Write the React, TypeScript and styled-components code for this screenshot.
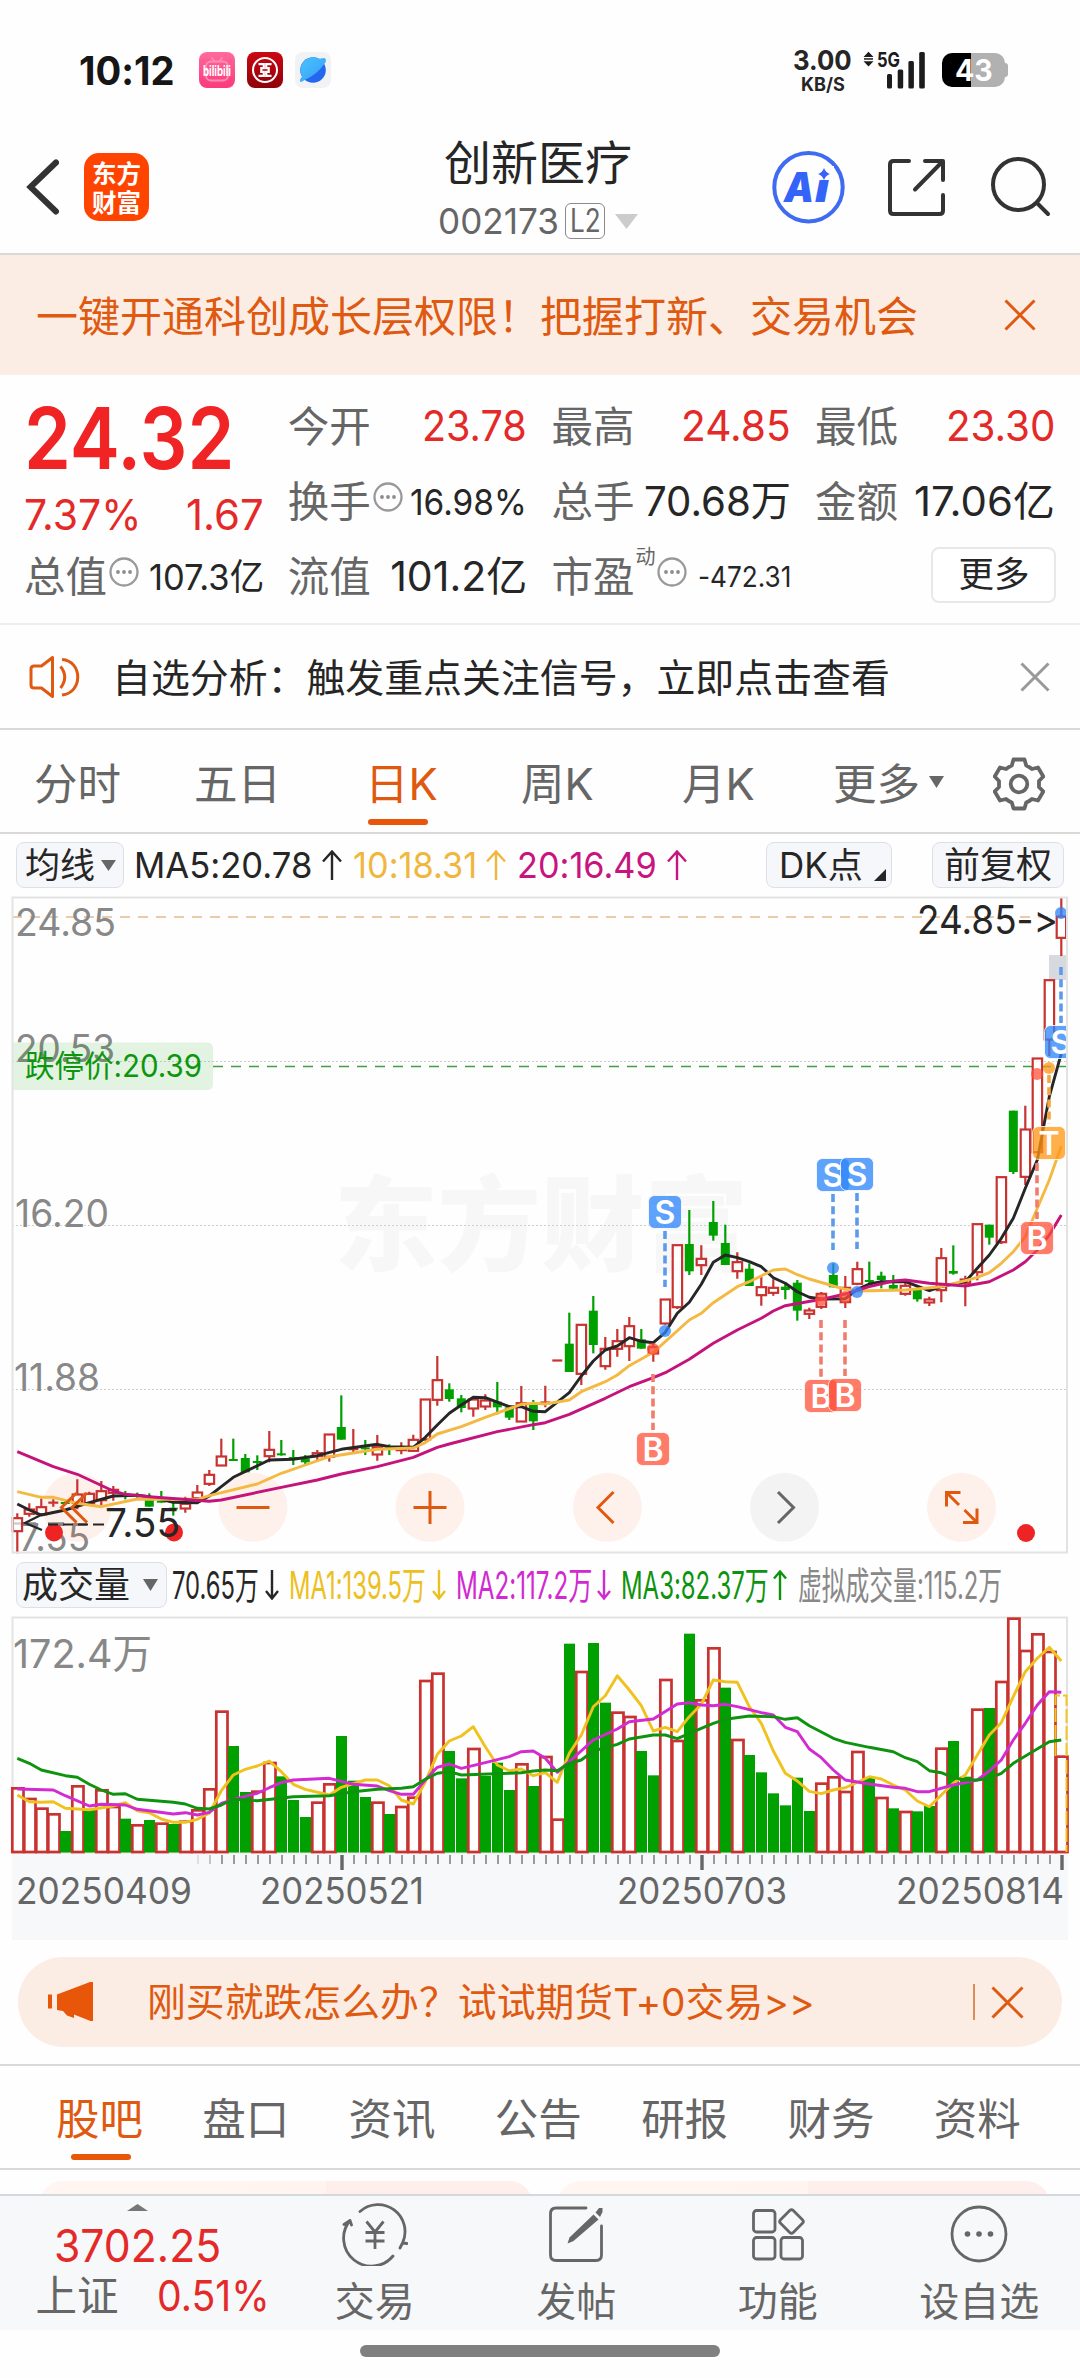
import React, { useLayoutEffect, useRef, useState } from "react";
import styled, { createGlobalStyle } from "styled-components";

const FONT = `Inter, "Noto Sans CJK SC", sans-serif`;
const ORANGE = "#df5a10";
const RED = "#e32a28";
const INK = "#262626";
const GREY = "#666666";

const GlobalStyle = createGlobalStyle`
  * { box-sizing: border-box; }
  body { margin: 0; background: #fefefe; font-family: ${FONT}; color: ${INK}; font-feature-settings: "calt" 0; }
  svg { display: block; flex: none; }
`;

/* ---------- text that shrinks to its column ---------- */

const FitBox = styled.span<{ $w: number; $size: number; $color?: string; $weight?: number; $ml?: number }>`
  display: block;
  flex: none;
  width: ${(p) => p.$w}px;
  margin-left: ${(p) => p.$ml ?? 0}px;
  font-size: ${(p) => p.$size}px;
  line-height: 1;
  color: ${(p) => p.$color ?? "inherit"};
  font-weight: ${(p) => p.$weight ?? 400};
  white-space: pre;
`;
const FitInner = styled.span`
  display: inline-block;
  transform-origin: left center;
`;

type FitProps = { w: number; size: number; color?: string; weight?: number; ml?: number; children: string };

function Fit({ w, size, color, weight, ml, children }: FitProps) {
  const ref = useRef<HTMLSpanElement>(null);
  const [k, setK] = useState(1);
  useLayoutEffect(() => {
    if (ref.current) setK(w / ref.current.offsetWidth);
  }, [w, size, weight, children]);
  return (
    <FitBox $w={w} $size={size} $color={color} $weight={weight} $ml={ml}>
      <FitInner ref={ref} style={{ transform: `scaleX(${k})` }}>
        {children}
      </FitInner>
    </FitBox>
  );
}

/* ---------- page frame ---------- */

const Page = styled.div`
  width: 1080px;
  height: 2378px;
  display: flex;
  flex-direction: column;
  overflow: hidden;
  background: #fefefe;
  & > * { flex-shrink: 0; }
`;

/* ---------- status bar ---------- */

const StatusBar = styled.div`
  height: 118px;
  padding: 22px 72px 0 79px;
  display: flex;
  align-items: center;
`;
const StatusIcons = styled.div`
  display: flex;
  gap: 12px;
  margin-left: 24px;
`;
const NetSpeed = styled.div`
  display: flex;
  flex-direction: column;
  align-items: center;
  margin-right: 11px;
`;
const Battery = styled.div`
  width: 63px;
  height: 34px;
  margin-left: 17px;
  border-radius: 10px;
  background: linear-gradient(90deg, #000 0 29px, #b1b1b1 29px);
  display: flex;
  align-items: center;
  justify-content: center;
`;
const BatteryNub = styled.div`
  width: 3px;
  height: 14px;
  border-radius: 0 3px 3px 0;
  background: #b1b1b1;
`;

function BiliIcon() {
  return (
    <svg width="36" height="36" viewBox="0 0 36 36">
      <defs>
        <linearGradient id="bili" x1="0" y1="0" x2="0" y2="1">
          <stop offset="0" stopColor="#ff6a9c" />
          <stop offset="1" stopColor="#fb3a7c" />
        </linearGradient>
      </defs>
      <rect width="36" height="36" rx="8" fill="url(#bili)" />
      <g fill="none" stroke="#ff8db3" strokeWidth="1.8" strokeLinecap="round">
        <rect x="7" y="9.500" width="22" height="19" rx="5" />
        <path d="M13 6l3 3.500M23 6l-3 3.500" />
      </g>
      <text x="4" y="24" fontFamily={FONT} fontSize="14" fontWeight="700" fill="#fff" textLength="28" lengthAdjust="spacingAndGlyphs">
        bilibili
      </text>
    </svg>
  );
}

function BankIcon() {
  return (
    <svg width="36" height="36" viewBox="0 0 36 36">
      <defs>
        <linearGradient id="bank" x1="0" y1="0" x2="0" y2="1">
          <stop offset="0" stopColor="#cc0714" />
          <stop offset="1" stopColor="#8f0208" />
        </linearGradient>
      </defs>
      <rect width="36" height="36" rx="8" fill="url(#bank)" />
      <circle cx="18" cy="18" r="12" fill="none" stroke="#fff" strokeWidth="2" />
      <path d="M11.500 12.200h5.300v4h-2.500v3.600h2.500v4h-5.300M24.500 12.200h-5.300v4h2.500v3.600h-2.500v4h5.300" fill="none" stroke="#fff" strokeWidth="2.200" />
    </svg>
  );
}

function PlanetIcon() {
  return (
    <svg width="36" height="36" viewBox="0 0 36 36">
      <defs>
        <linearGradient id="planet" x1="0" y1="0" x2="1" y2="1">
          <stop offset="0" stopColor="#48c4ff" />
          <stop offset="1" stopColor="#3a9bf6" />
        </linearGradient>
      </defs>
      <rect width="36" height="36" rx="8" fill="#f1f2f4" />
      <circle cx="18" cy="18" r="12.800" fill="#2467ee" />
      <path d="M9.500 27.500A12.800 12.800 0 0 1 24 6.700L29 6q3 .8 1.400 4.500Q23 22 9.500 28Q4 32 5 27.500l2-3z" fill="url(#planet)" />
    </svg>
  );
}

function SignalIcon() {
  return (
    <svg width="62" height="38" viewBox="863 50 62 38">
      <g fill="#1c1c1c">
        <path d="M868.500 50.800l5 5.200h-10zM868.500 65.400l5-5.200h-10z" />
        <rect x="864" y="57.200" width="9" height="1.500" />
        <rect x="887" y="73" width="5" height="14.500" rx="1.500" />
        <rect x="897.700" y="68.500" width="5.500" height="19" rx="1.500" />
        <rect x="908.400" y="60" width="5.500" height="27.500" rx="1.500" />
        <rect x="919.200" y="51" width="5.600" height="36.500" rx="1.500" />
        <text x="877" y="66" fontFamily={FONT} fontSize="20.500" fontWeight="700" textLength="23" lengthAdjust="spacingAndGlyphs">
          5G
        </text>
      </g>
    </svg>
  );
}

/* ---------- header ---------- */

const Header = styled.header`
  height: 137px;
  border-bottom: 2px solid #d9d9d9;
  display: flex;
  align-items: center;
  padding: 3px 29px 0 26px;
`;
const Logo = styled.div`
  width: 68px;
  height: 68px;
  margin-left: 25px;
  border-radius: 15px;
  background: #ff4400;
  color: #fff;
  font: 700 24.500px/29px "Noto Sans CJK SC", sans-serif;
  display: flex;
  flex-direction: column;
  align-items: center;
  justify-content: center;
`;
const Titles = styled.div`
  display: flex;
  flex-direction: column;
  align-items: flex-start;
  margin-left: 289px;
  padding-top: 4px;
  gap: 17px;
`;
const StockName = styled.h1`
  margin: 0 0 0 6px;
  font-size: 47px;
  line-height: 47px;
  font-weight: 400;
`;
const CodeRow = styled.div`
  display: flex;
  align-items: center;
  height: 36px;
`;
const LevelTag = styled.div`
  width: 40px;
  height: 36px;
  margin: 0 10px 0 6px;
  border: 1.500px solid #8a8a8a;
  border-radius: 6px;
  display: flex;
  align-items: center;
  justify-content: center;
`;
const HeaderTools = styled.div`
  display: flex;
  align-items: center;
  margin-left: 133px;
  width: 280px;
`;

function Cross({ size, color, sw = 3 }: { size: number; color: string; sw?: number }) {
  return (
    <svg width={size} height={size} viewBox={`0 0 ${size} ${size}`}>
      <path d={`M1.500 1.500L${size - 1.5} ${size - 1.5}M${size - 1.5} 1.500L1.500 ${size - 1.5}`} stroke={color} strokeWidth={sw} fill="none" />
    </svg>
  );
}

function Caret({ w, h, color, up }: { w: number; h: number; color: string; up?: boolean }) {
  return (
    <svg width={w} height={h} viewBox={`0 0 ${w} ${h}`}>
      <path d={up ? `M0 ${h}H${w}L${w / 2} 0z` : `M0 0H${w}L${w / 2} ${h}z`} fill={color} />
    </svg>
  );
}

/* ---------- banner, quote board, notice ---------- */

const Banner = styled.div`
  height: 120px;
  background: #fcede4;
  color: ${ORANGE};
  display: flex;
  align-items: center;
  justify-content: space-between;
  padding: 0 44px 0 36px;
  font-size: 42px;
  line-height: 42px;
`;
const BannerText = styled.span`
  padding-top: 3px;
`;
const Quote = styled.section`
  height: 250px;
  border-bottom: 2px solid #ededed;
  padding: 14px 25px 0 24px;
  display: grid;
  grid-template-columns: repeat(4, 239.500px);
  grid-template-rows: repeat(3, 75px);
  column-gap: 24.200px;
`;
const PriceCell = styled.div`
  grid-row: 1 / 3;
  display: flex;
  flex-direction: column;
  padding-top: 7px;
`;
const PriceChange = styled.div`
  display: flex;
  justify-content: space-between;
  margin-top: 12px;
`;
const Cell = styled.div`
  display: flex;
  align-items: center;
`;
const Label = styled.span`
  font-size: 41.500px;
  line-height: 42px;
  color: ${GREY};
`;
const Push = styled.span`
  flex: 1;
`;
const Sup = styled.span`
  font-size: 20px;
  line-height: 20px;
  color: ${GREY};
  align-self: flex-start;
  margin: 8px 0 0 1px;
`;
const DotsWrap = styled.span<{ $ml: number }>`
  margin: 0 0 9px ${(p) => p.$ml}px;
`;
const MoreButton = styled.button`
  width: 125px;
  height: 56px;
  margin: 0 -1px 4px auto;
  padding: 0 0 0 2px;
  border: 2px solid #e8e8e8;
  border-radius: 8px;
  background: #fff;
  font: 400 35.500px/36px ${FONT};
  color: ${INK};
`;

function Dots({ ml }: { ml: number }) {
  return (
    <DotsWrap $ml={ml}>
      <svg width="30" height="30" viewBox="0 0 30 30">
        <circle cx="15" cy="15" r="13.500" fill="none" stroke="#999" strokeWidth="2.300" />
        <g fill="#8c8c8c">
          <circle cx="9" cy="15" r="1.900" />
          <circle cx="15" cy="15" r="1.900" />
          <circle cx="21" cy="15" r="1.900" />
        </g>
      </svg>
    </DotsWrap>
  );
}

const Notice = styled.div`
  height: 105px;
  border-bottom: 2px solid #d9d9d9;
  display: flex;
  align-items: center;
  padding: 0 30px 0 29px;
`;
const NoticeText = styled.span`
  font-size: 38.900px;
  line-height: 40px;
  padding-top: 2px;
  margin: 0 auto 0 31px;
`;

/* ---------- period tabs ---------- */

const PeriodTabs = styled.nav`
  height: 104px;
  border-bottom: 2px solid #d9d9d9;
  display: flex;
  align-items: flex-start;
  padding: 32px 0 0 34px;
`;
const Tab = styled.div<{ $ml?: number; $w: number; $active?: boolean; $gap: number; $bar: number }>`
  width: ${(p) => p.$w}px;
  margin-left: ${(p) => p.$ml ?? 0}px;
  font-size: 43.500px;
  line-height: 44px;
  white-space: nowrap;
  color: ${(p) => (p.$active ? ORANGE : GREY)};
  &::after {
    content: "";
    display: ${(p) => (p.$active ? "block" : "none")};
    width: 60px;
    height: 6px;
    margin: ${(p) => p.$gap}px 0 0 ${(p) => p.$bar}px;
    border-radius: 3px;
    background: #e8560a;
  }
`;
const CaretSlot = styled.div`
  margin: 14px 0 0 9px;
`;
const GearSlot = styled.div`
  margin: -5px 0 0 49px;
`;

function Gear() {
  return (
    <svg width="52" height="54" viewBox="-26 -27 52 54">
      <path
        d="M-5.500 -24.500H5.500L7.200 -18.500Q10.500 -17.200 13 -15L19 -16.500L24.300 -7.500L20 -3V3L24.300 7.500L19 16.500L13 15Q10.500 17.200 7.200 18.500L5.500 24.500H-5.500L-7.200 18.500Q-10.500 17.200 -13 15L-19 16.500L-24.300 7.500L-20 3V-3L-24.300 -7.500L-19 -16.500L-13 -15Q-10.500 -17.200 -7.200 -18.500Z"
        fill="none"
        stroke={GREY}
        strokeWidth="3.800"
        strokeLinejoin="round"
      />
      <circle r="8.300" fill="none" stroke={GREY} strokeWidth="3.800" />
    </svg>
  );
}

/* ---------- indicator rows ---------- */

const IndicatorRow = styled.div<{ $h: number }>`
  height: ${(p) => p.$h}px;
  padding: 0 16px 0 16px;
  display: flex;
  align-items: center;
`;
const Chip = styled.div<{ $w: number; $ml?: number; $pad: number }>`
  width: ${(p) => p.$w}px;
  height: 46px;
  margin-left: ${(p) => p.$ml ?? 0}px;
  padding-left: ${(p) => p.$pad}px;
  display: flex;
  align-items: center;
  flex: none;
  border: 1.500px solid #dde0e7;
  border-radius: 8px;
  background: #f6f7fa;
`;
const ChipCaret = styled.div<{ $ml: number; $mt?: number }>`
  margin-left: ${(p) => p.$ml}px;
  margin-top: ${(p) => p.$mt ?? 0}px;
`;
const ArrowSlot = styled.div<{ $ml: number }>`
  margin-left: ${(p) => p.$ml}px;
`;

function Arrow({ ml, w, color, down }: { ml: number; w: number; color: string; down?: boolean }) {
  const m = w / 2;
  return (
    <ArrowSlot $ml={ml}>
      <svg width={w} height="30" viewBox={`0 0 ${w} 30`}>
        <path
          d={down ? `M${m} 0V28M1 ${28 - m}L${m} 28.500L${w - 1} ${28 - m}` : `M${m} 30V2M1 ${1.5 + m}L${m} 1.500L${w - 1} ${1.5 + m}`}
          fill="none"
          stroke={color}
          strokeWidth="2.400"
        />
      </svg>
    </ArrowSlot>
  );
}

/* ---------- chart data: pixel rows on the plotting surface ---------- */

type Candle = ["r" | "g", number, number, number, number];
const early: Candle[] = [
  ["r", 910, 923, 965, 1030], ["r", 880, 897, 913, 920], ["r", 865, 890, 914, 916], ["r", 868, 876, 880, 890],
  ["g", 872, 876, 880, 884], ["r", 808, 852, 880, 898], ["r", 845, 850, 882, 885], ["r", 813, 842, 872, 885],
  ["r", 828, 838, 850, 872], ["g", 843, 850, 860, 868], ["g", 848, 855, 859, 870], ["g", 850, 865, 890, 890],
  ["g", 843, 872, 876, 878], ["g", 875, 893, 897, 917], ["r", 860, 880, 897, 908], ["r", 825, 846, 866, 868],
  ["r", 780, 793, 823, 828], ["r", 686, 738, 768, 768], ["g", 686, 747, 752, 752], ["g", 732, 744, 787, 787],
  ["g", 736, 753, 758, 780], ["r", 663, 718, 740, 757], ["g", 690, 730, 735, 737], ["g", 720, 741, 746, 765],
  ["g", 735, 745, 757, 762], ["r", 720, 728, 740, 750], ["r", 672, 672, 742, 755], ["g", 556, 651, 689, 689],
  ["r", 657, 715, 720, 727], ["g", 690, 712, 716, 735], ["r", 675, 710, 735, 752], ["g", 703, 708, 712, 735],
  ["r", 697, 710, 722, 733], ["r", 674, 688, 724, 726], ["r", 567, 567, 690, 692], ["r", 438, 509, 571, 587],
  ["g", 520, 538, 567, 575], ["g", 555, 565, 594, 607], ["r", 565, 567, 597, 620], ["r", 553, 570, 591, 600],
  ["g", 516, 575, 592, 613], ["g", 585, 592, 623, 630], ["r", 528, 578, 636, 636], ["g", 570, 580, 634, 660],
];
const late: Candle[] = [
  ["r", 857, 905, 910, 922], ["r", 779, 779, 784, 784], ["g", 638, 731, 816, 816], ["r", 673, 673, 823, 855],
  ["g", 588, 632, 735, 760], ["r", 711, 745, 800, 809], ["r", 687, 722, 748, 770], ["r", 651, 677, 740, 783],
  ["g", 687, 718, 746, 746], ["r", 730, 740, 762, 785], ["r", 597, 597, 672, 674], ["r", 434, 434, 623, 627],
  ["g", 330, 432, 514, 525], ["r", 436, 475, 497, 525], ["g", 303, 366, 407, 422], ["g", 374, 429, 495, 495],
  ["r", 457, 485, 515, 536], ["g", 490, 506, 558, 558], ["r", 530, 560, 587, 617], ["r", 538, 562, 580, 587],
  ["g", 552, 560, 570, 598], ["g", 540, 548, 632, 662], ["r", 623, 630, 643, 657], ["r", 576, 580, 622, 627],
  ["g", 490, 525, 562, 562], ["r", 528, 562, 608, 624], ["r", 485, 506, 553, 556], ["g", 485, 540, 546, 550],
  ["g", 515, 527, 540, 565], ["g", 525, 555, 566, 570], ["r", 545, 556, 583, 587], ["g", 560, 565, 598, 605],
  ["r", 590, 597, 609, 618], ["r", 444, 473, 572, 607], ["g", 436, 513, 521, 524], ["r", 527, 537, 550, 619],
  ["r", 371, 371, 518, 541], ["g", 374, 374, 413, 434], ["r", 230, 230, 428, 432], ["g", 32, 32, 216, 222],
  ["r", 17, 87, 232, 255], ["r", -126, -126, 158, 158], ["r", -361, -361, -180, -132], ["r", -609, -552, -485, -432],
];
const up1 = (v: number) => 1210 + v / 3;
const up2 = (v: number) => 1100 + v / 3;
const candles: Candle[] = [
  ...early.map((c): Candle => [c[0], up1(c[1]), up1(c[2]), up1(c[3]), up1(c[4])]),
  ...late.map((c): Candle => [c[0], up2(c[1]), up2(c[2]), up2(c[3]), up2(c[4])]),
];
const cx = (i: number) => 17.3 + 12 * i;

const path = (pts: number[], y: (v: number, i: number) => number) => {
  let d = "";
  for (let k = 0; k < pts.length; k += 2) d += `${k ? "L" : "M"}${cx(pts[k]).toFixed(1)} ${y(pts[k + 1], pts[k]).toFixed(1)}`;
  return d;
};
const priceY = (v: number, i: number) => (i < 44 ? up1(v) : up2(v));
const volY = (v: number) => 1550 + v / 3;

const ma5 = [0,882,1,900,2,915,4,900,6,878,8,858,10,856,11,860,13,877,15,878,16,858,17,830,18,802,21,750,23,748,25,737,27,718,30,703,31,710,33,712,34,682,35,645,36,610,37,585,38,562,39,563,41,590,42,590,43,604,44,935,46,878,47,828,48,783,49,750,50,738,51,713,52,724,53,728,54,697,55,640,56,607,57,553,58,487,59,465,60,473,61,485,62,500,63,533,64,550,65,575,66,592,67,597,69,596,70,568,71,552,72,545,74,545,76,572,77,560,79,545,80,505,81,465,82,415,83,355,84,265,85,180,86,-10,87,-140];
const ma10 = [0,845,2,862,3,862,5,880,7,890,10,867,15,868,16,857,20,822,22,790,24,765,26,740,30,718,33,714,34,698,35,672,37,650,39,622,42,583,43,580,44,912,46,900,47,875,49,845,50,825,51,797,53,757,56,660,57,640,58,608,60,560,61,545,63,510,64,507,65,524,66,537,69,568,70,573,74,570,77,560,79,542,80,532,81,518,82,490,83,455,84,410,85,325,86,240,87,138];
const ma20 = [0,725,3,770,5,793,8,843,9,853,11,860,16,874,17,870,22,832,25,810,27,792,30,770,33,742,35,712,36,702,40,665,43,644,44,968,46,943,49,895,51,860,53,833,54,818,56,778,58,730,60,690,62,655,63,633,64,617,67,598,69,582,71,560,73,543,74,540,76,550,79,558,81,545,83,510,84,485,85,450,86,405,87,345];

const volumes =
  "r712 r744 r773 r790 g843 r706 g780 r718 r768 g806 r823 g810 r818 g822 r812 r778 r715 r482 g588 g726 r722 r636 g679 g750 g801 r755 r700 g558 g692 g741 r755 g792 r768 r740 r390 r368 g603 g685 r594 g678 g638 g720 r640 g708 r618 r806 g281 r363 g279 g458 r485 r498 g603 g676 r387 r570 g251 r448 r292 g413 r567 g615 g667 g730 g766 g683 g783 r698 r679 r723 r603 g683 r741 g775 r783 g784 g768 r593 g573 g680 r476 g474 r393 r203 r300 r250 r303 r617".split(" ");
const vma1 = [0,735,1,755,2,757,3,755,4,775,6,779,8,768,9,758,10,782,11,788,12,807,13,817,14,817,15,808,16,790,17,722,18,675,19,658,20,648,21,633,22,665,23,703,24,718,26,735,27,712,29,690,30,690,31,707,32,750,33,762,34,695,35,613,36,573,37,558,38,530,39,590,40,645,41,662,42,657,43,677,44,668,45,697,46,610,47,555,48,470,49,437,50,377,51,420,52,467,53,543,54,532,55,545,56,500,57,463,58,390,59,395,60,397,61,470,62,520,63,603,64,670,65,693,66,724,67,731,68,720,69,713,70,697,71,680,72,687,73,705,74,720,75,753,76,770,77,735,78,700,79,675,80,615,81,555,82,518,83,440,84,365,85,325,86,292,87,333];
const vma2 = [0,717,3,720,4,737,6,768,7,763,9,765,10,778,13,792,14,788,15,795,16,787,17,760,18,748,20,730,21,713,22,698,23,690,26,685,28,703,30,708,31,722,32,733,33,733,34,690,35,652,36,642,37,655,39,638,41,620,42,605,43,603,44,625,45,667,46,635,48,570,50,537,51,515,53,507,55,462,56,458,57,465,58,467,59,463,60,470,62,488,63,495,64,532,65,545,66,597,67,623,68,660,69,690,71,702,73,712,74,715,75,725,76,725,78,705,79,698,80,690,81,663,82,630,83,570,84,520,85,465,86,425,87,427];
const vma3 = [0,625,1,640,2,660,4,677,5,682,6,703,7,720,8,733,9,731,10,748,13,757,14,762,15,775,16,777,17,765,18,748,20,752,23,740,26,737,28,725,30,718,32,715,33,710,34,688,35,670,36,665,37,675,41,670,42,668,43,663,44,660,45,662,46,640,47,630,48,603,50,583,51,567,53,555,54,555,55,566,57,535,58,520,59,508,61,498,63,500,64,508,65,503,66,527,68,565,69,577,71,592,73,605,74,623,75,635,76,662,77,668,78,683,79,690,80,690,81,685,82,670,83,640,86,575,87,570];

const CANDLE_RED = "#c83230";
const CANDLE_GREEN = "#00a000";
const FRAME = "#e3e3e3";

const ChartSvg = styled.svg`
  font-family: ${FONT};
`;
const Mark = styled.text`
  font-weight: 600;
  font-size: 32px;
  text-anchor: middle;
  fill: #fff;
`;

type TxtProps = { x: number; x2: number; y: number; size: number; fill: string; weight?: number; children: string };
function Txt({ x, x2, y, size, fill, weight, children }: TxtProps) {
  return (
    <text x={x} y={y} fontSize={size} fill={fill} fontWeight={weight} textLength={x2 - x} lengthAdjust="spacingAndGlyphs">
      {children}
    </text>
  );
}

const tone: Record<string, [string, string]> = {
  S: ["rgba(45,133,250,.76)", "#5c9bec"],
  B: ["rgba(255,78,54,.74)", "#f27c6c"],
  T: ["rgba(255,150,20,.76)", "#f2a63c"],
};
function Marker({ k, x, y, dot, from, to }: { k: string; x: number; y: number; dot: number; from: number; to: number }) {
  const [box, line] = tone[k];
  return (
    <g>
      <path d={`M${x} ${from}V${to}`} stroke={line} strokeWidth="3.600" strokeDasharray="8 4.200" />
      <circle cx={x} cy={dot} r="6" fill={box} />
      <rect x={x - 16.5} y={y - 16.5} width="33" height="33" rx="6" fill={box} stroke="rgba(255,255,255,.8)" strokeWidth="1" />
      <Mark x={x} y={y + 11.5}>{k}</Mark>
    </g>
  );
}

function PriceChart() {
  const o = { fill: "none", stroke: ORANGE, strokeWidth: 3 };
  return (
    <ChartSvg width="1080" height="658" viewBox="0 896 1080 658">
      <defs>
        <clipPath id="plot">
          <rect x="11" y="896" width="1057" height="658" />
        </clipPath>
      </defs>
      <g clipPath="url(#plot)">
        <Txt x={334} x2={748} y={1263} size={103} fill="#f7f7f7" weight={900}>东方财富</Txt>
        <g stroke="#cfcfcf" strokeWidth="1" strokeDasharray="2 2">
          <path d="M12 1061.500H1067M12 1225.500H1067M12 1389.500H1067" />
        </g>
        <path d="M12 917H1067" stroke="#e3b98c" strokeWidth="1.600" strokeDasharray="10 8" />
        <path d="M213 1066.500H1067" stroke="#3f9f48" strokeWidth="1.400" strokeDasharray="10 8" />
        <Txt x={15} x2={116} y={935.5} size={38} fill="#888">24.85</Txt>
        <Txt x={15} x2={115} y={1061.5} size={38} fill="#888">20.53</Txt>
        <Txt x={15} x2={109} y={1226.5} size={38} fill="#888">16.20</Txt>
        <Txt x={14} x2={100} y={1390.500} size={38} fill="#888">11.88</Txt>
        <Txt x={19} x2={90} y={1550.5} size={38} fill="#888">7.55</Txt>
        <path d="M12 1042.500H207q6 0 6 6V1084q0 6 -6 6H12z" fill="rgba(0,155,0,.11)" />
        <Txt x={25} x2={202} y={1077} size={31} fill="#0d960d">跌停价:20.39</Txt>

        {[77, 253, 430, 607.5, 961.5].map((x) => (
          <circle key={x} cx={x} cy="1507.300" r="34.500" fill="rgba(255,100,30,.09)" />
        ))}
        <circle cx="784.500" cy="1507.300" r="34.500" fill="#f3f3f3" />
        <circle cx="54" cy="1532.500" r="9" fill="#ee2424" />
        <circle cx="174" cy="1532.500" r="9" fill="#ee2424" />
        <circle cx="1026" cy="1533" r="9" fill="#ee2424" />
        <path d="M14 1523.500H36M48 1523.500H64" stroke="#888" strokeWidth="2.400" />

        <rect x="1049" y="955" width="18" height="25" fill="#d6d9de" />
        {candles.map(([c, hi, top, bot, lo], i) => {
          const x = cx(i);
          const thin = bot - top < 2.5;
          const color = c === "r" ? CANDLE_RED : CANDLE_GREEN;
          return (
            <g key={i} stroke={color} strokeWidth="2.200">
              {c === "r" ? (
                <>
                  <path d={`M${x} ${hi}V${top}M${x} ${bot}V${lo}`} />
                  {thin ? (
                    <path d={`M${x - 5} ${(top + bot) / 2}h10`} />
                  ) : (
                    <rect x={x - 4.6} y={top + 0.5} width="9.400" height={bot - top - 1} fill="#fff" fillOpacity=".6" />
                  )}
                </>
              ) : (
                <>
                  <path d={`M${x} ${hi}V${lo}`} />
                  <rect x={x - 4.5} y={top} width="9" height={Math.max(bot - top, 2)} fill={color} stroke="none" />
                </>
              )}
            </g>
          );
        })}
        <g fill="none" strokeWidth="2.900" strokeLinejoin="round">
          <path d={path(ma5, priceY)} stroke={INK} />
          <path d={path(ma10, priceY)} stroke="#f4b942" />
          <path d={path(ma20, priceY)} stroke="#c4147c" />
        </g>

        <Marker k="B" x={653} y={1449} dot={1349} from={1374} to={1430} />
        <Marker k="S" x={665} y={1212} dot={1331} from={1231} to={1287} />
        <Marker k="S" x={833} y={1175} dot={1268} from={1194} to={1250} />
        <Marker k="S" x={857} y={1174} dot={1292} from={1193} to={1249} />
        <Marker k="B" x={821} y={1396} dot={1300} from={1320} to={1377} />
        <Marker k="B" x={845} y={1395} dot={1297} from={1320} to={1376} />
        <Marker k="B" x={1037} y={1238} dot={1074} from={1163} to={1219} />
        <Marker k="T" x={1049} y={1143} dot={1068} from={1075} to={1124} />
        <Marker k="S" x={1061} y={1042} dot={913} from={967} to={1023} />

        <g {...o}>
          <path d="M76.500 1493L61.500 1507.500L76.500 1522.500M87 1493L72 1507.500L87 1522.500" />
          <path d="M236.500 1507.500H269.500M413.500 1507.500H446.500M430 1491V1524" />
          <path d="M613.500 1492L598 1507.500L613.500 1523" />
          <path d="M778 1492L793.500 1507.500L778 1523" stroke={GREY} />
          <path d="M946.500 1506.500V1492.500H960.500M946.500 1492.500L959 1505M977 1508.500V1522.500H963M977 1522.500L964.500 1510" />
        </g>
        <path d="M41 1515L25 1523L42 1530M48 1524.500h10m5 0h10m5 0h10m5 0h11" fill="none" stroke={INK} strokeWidth="2.200" />
        <Txt x={105} x2={180} y={1536.500} size={39} fill={INK}>7.55</Txt>
        <Txt x={917} x2={1058} y={933.5} size={39} fill={INK}>{"24.85->"}</Txt>
        <rect x="12.500" y="897.500" width="1054.500" height="655" fill="none" stroke={FRAME} strokeWidth="2" />
      </g>
    </ChartSvg>
  );
}

function VolumeChart() {
  return (
    <ChartSvg width="1080" height="324" viewBox="0 1616 1080 324">
      <rect x="12" y="1853" width="1056" height="87" fill="#f7f8fa" />
      <rect x="12.500" y="1617.500" width="1054.500" height="235" fill="none" stroke={FRAME} strokeWidth="2" />
      <Txt x={13} x2={152} y={1667.5} size={40} fill="#888">172.4万</Txt>
      {volumes.map((v, i) => {
        const y = volY(Number(v.slice(1)));
        return v[0] === "g" ? (
          <rect key={i} x={cx(i) - 5.300} y={y} width="11" height={1852.500 - y} fill={CANDLE_GREEN} />
        ) : (
          <rect key={i} x={cx(i) - 5} y={y + 1} width="11.200" height={1851 - y} fill="#fff" stroke={CANDLE_RED} strokeWidth="2.700" />
        );
      })}
      <path d="M1055.500 1756V1695.500H1066.500V1756M1066.500 1760V1852" fill="none" stroke="#f2c41c" strokeWidth="2" strokeDasharray="14 3" />
      <g fill="none" strokeWidth="2.900" strokeLinejoin="round">
        <path d={path(vma1, volY)} stroke="#f0c21e" />
        <path d={path(vma2, volY)} stroke="#d22bd2" />
        <path d={path(vma3, volY)} stroke="#0f930f" />
      </g>
      {volumes.map((_, i) => {
        if (i < 15) return null;
        const major = i === 27 || i === 57 || i === 87;
        return (
          <path
            key={i}
            d={`M${cx(i) + 0.7} 1855V${major ? 1870 : 1864}`}
            stroke={major ? GREY : "#9a9a9a"}
            strokeWidth={major ? 3.4 : 2}
            opacity={i === 15 ? 0.25 : i === 16 ? 0.55 : 1}
          />
        );
      })}
      <Txt x={16} x2={192} y={1903.5} size={36.5} fill={GREY}>20250409</Txt>
      <Txt x={260} x2={424} y={1903.5} size={36.5} fill={GREY}>20250521</Txt>
      <Txt x={617} x2={787} y={1903.5} size={36.5} fill={GREY}>20250703</Txt>
      <Txt x={896} x2={1064} y={1903.5} size={36.5} fill={GREY}>20250814</Txt>
    </ChartSvg>
  );
}

/* ---------- promo, section tabs, card strip ---------- */

const Promo = styled.div`
  height: 90px;
  margin: 17px 18px;
  padding: 0 38px 0 29px;
  border-radius: 45px;
  background: #fcede4;
  display: flex;
  align-items: center;
`;
const PromoRule = styled.div`
  flex: none;
  width: 2px;
  height: 36px;
  margin: 0 16px 0 auto;
  background: #e08a58;
`;
const SectionTabs = styled.nav`
  height: 106px;
  border-top: 2px solid #d9d9d9;
  border-bottom: 2px solid #d9d9d9;
  display: flex;
  padding: 31px 0 0 56px;
`;
const CardStrip = styled.div`
  height: 24px;
  padding: 11px 30px 0 39px;
  display: flex;
  gap: 24px;
  overflow: hidden;
`;
const Card = styled.div<{ $split: number }>`
  flex: 1;
  height: 60px;
  border-radius: 24px;
  background: linear-gradient(90deg, #fff6f2 0, #fff4f0 ${(p) => p.$split}%, #feefed ${(p) => p.$split}%);
`;

/* ---------- bottom bar ---------- */

const BottomBar = styled.footer`
  height: 136px;
  border-top: 2px solid #d3d8de;
  background: #f7f8fa;
  display: flex;
`;
const IndexBox = styled.div`
  width: 274px;
  display: flex;
  flex-direction: column;
  align-items: center;
  padding-top: 8px;
  gap: 12px;
`;
const IndexRow = styled.div`
  width: 234px;
  display: flex;
  align-items: center;
  margin: -5px 0 0 31px;
`;
const NavItem = styled.div`
  flex: 1;
  display: flex;
  flex-direction: column;
  align-items: center;
  padding-top: 6px;
  gap: 15px;
  font-size: 40px;
  line-height: 42px;
  color: ${GREY};
`;
const HomeArea = styled.div`
  height: 48px;
  display: flex;
  justify-content: center;
  padding-top: 15px;
`;
const HomePill = styled.div`
  width: 360px;
  height: 12px;
  border-radius: 6px;
  background: #808080;
`;

const navStroke = { fill: "none", stroke: GREY, strokeWidth: 2.8, strokeLinecap: "round" as const, strokeLinejoin: "round" as const };

function NavTrade() {
  return (
    <svg width="66" height="64" viewBox="-33 -32 66 64">
      <g {...navStroke}>
        <path d="M-15 -22.500A27 27 0 0 1 27.500 9L32 9.500M27.500 9L25 14" />
        <path d="M18 22A27.500 27.500 0 0 1 -25 -13.500L-31 -9.500M-25 -13.500L-23.500 -9" />
        <path d="M-8.500 -12.500L0 -2L8.500 -12.500M0 -2V15M-9.500 -1.500H9.500M-9.500 7H9.500" strokeLinecap="butt" />
      </g>
    </svg>
  );
}
function NavPost() {
  return (
    <svg width="66" height="64" viewBox="-33 -32 66 64">
      <path d="M10 -26H-20Q-25.500 -26 -25.500 -20V21Q-25.500 26.500 -20 26.500H20Q25.500 26.500 25.500 21V-8" {...navStroke} />
      <path d="M17.500 -19.500L22.500 -14.500L-2.500 7L-8.500 9.500L-6.500 3.500Z" fill={GREY} />
      <path d="M19.500 -21.500L23 -26H26.500V-22L24 -17z" fill={GREY} />
    </svg>
  );
}
function NavFeatures() {
  return (
    <svg width="66" height="64" viewBox="-33 -32 66 64">
      <g {...navStroke}>
        <rect x="-24.500" y="-23.500" width="21.500" height="21.500" rx="3" />
        <rect x="-24.500" y="3.500" width="21.500" height="21.500" rx="3" />
        <rect x="3" y="3.500" width="21.500" height="21.500" rx="3" />
        <rect x="4.500" y="-21.500" width="18" height="18" rx="2.500" transform="rotate(45 13.500 -12.500)" />
      </g>
    </svg>
  );
}
function NavMore() {
  return (
    <svg width="66" height="64" viewBox="-33 -32 66 64">
      <circle r="27" {...navStroke} />
      <g fill={GREY}>
        <circle cx="-11.500" r="2.800" />
        <circle r="2.800" />
        <circle cx="11.500" r="2.800" />
      </g>
    </svg>
  );
}

const NAV = [
  { label: "交易", icon: <NavTrade /> },
  { label: "发帖", icon: <NavPost /> },
  { label: "功能", icon: <NavFeatures /> },
  { label: "设自选", icon: <NavMore /> },
];
const SECTIONS = ["股吧", "盘口", "资讯", "公告", "研报", "财务", "资料"];

export default function App() {
  return (
    <Page>
      <GlobalStyle />
      <StatusBar>
        <Fit w={96} size={39} weight={700} color="#161616">10:12</Fit>
        <StatusIcons>
          <BiliIcon />
          <BankIcon />
          <PlanetIcon />
        </StatusIcons>
        <Push />
        <NetSpeed>
          <Fit w={59} size={27.5} weight={700}>3.00</Fit>
          <Fit w={44} size={18.5} weight={700}>KB/S</Fit>
        </NetSpeed>
        <SignalIcon />
        <Battery>
          <Fit w={38} size={30} weight={700} color="#fff">43</Fit>
        </Battery>
        <BatteryNub />
      </StatusBar>

      <Header>
        <svg width="33" height="56" viewBox="26 159 33 56">
          <path d="M56 162.500L30.500 187L56 211.500" fill="none" stroke="#333" strokeWidth="6" strokeLinecap="round" />
        </svg>
        <Logo>
          <span>东方</span>
          <span>财富</span>
        </Logo>
        <Titles>
          <StockName>创新医疗</StockName>
          <CodeRow>
            <Fit w={121} size={36} color={GREY}>002173</Fit>
            <LevelTag>
              <Fit w={31} size={32} color={GREY}>L2</Fit>
            </LevelTag>
            <Caret w={23} h={15} color="#cccccc" />
          </CodeRow>
        </Titles>
        <HeaderTools>
          <svg width="280" height="76" viewBox="771 149 280 76">
            <circle cx="808.500" cy="187.200" r="34.200" fill="none" stroke="#3f6bf0" strokeWidth="4" />
            <g fill="#3564f8" fontFamily={FONT} fontWeight="900" fontSize="41" fontStyle="italic">
              <text x="784" y="201.500" textLength="30" lengthAdjust="spacingAndGlyphs">A</text>
              <text x="815" y="201.500" textLength="14" lengthAdjust="spacingAndGlyphs">i</text>
            </g>
            <rect x="814" y="166" width="20" height="13.500" fill="#fefefe" />
            <path d="M824 168q1.600 4.400 5.800 6q-4.200 1.600 -5.800 6q-1.600 -4.400 -5.800 -6q4.200 -1.600 5.800 -6z" fill="#3564f8" />
            <g fill="none" stroke="#333" strokeWidth="4" strokeLinecap="round" strokeLinejoin="round">
              <path d="M909 161H893.500Q890 161 890 164.500V210.500Q890 214 893.500 214H939.500Q943 214 943 210.500V195" />
              <path d="M925 161H943V180M942 162L915 189.500" />
              <circle cx="1018.500" cy="184.500" r="25.500" />
              <path d="M1037 203L1048 214" />
            </g>
          </svg>
        </HeaderTools>
      </Header>

      <Banner>
        <BannerText>一键开通科创成长层权限！把握打新、交易机会</BannerText>
        <Cross size={32} color={ORANGE} />
      </Banner>

      <Quote>
        <PriceCell>
          <Fit w={210} size={85} weight={600} color="#f02424">24.32</Fit>
          <PriceChange>
            <Fit w={117} size={43} color={RED}>7.37%</Fit>
            <Fit w={78} size={43} color={RED}>1.67</Fit>
          </PriceChange>
        </PriceCell>
        <Cell><Label>今开</Label><Push /><Fit w={105} size={42.500} color={RED}>23.78</Fit></Cell>
        <Cell><Label>最高</Label><Push /><Fit w={110} size={42.500} color={RED}>24.85</Fit></Cell>
        <Cell><Label>最低</Label><Push /><Fit w={109} size={42.500} color={RED}>23.30</Fit></Cell>
        <Cell><Label>换手</Label><Dots ml={2} /><Push /><Fit w={117} size={36}>16.98%</Fit></Cell>
        <Cell><Label>总手</Label><Push /><Fit w={147} size={41}>70.68万</Fit></Cell>
        <Cell><Label>金额</Label><Push /><Fit w={141} size={41}>17.06亿</Fit></Cell>
        <Cell><Label>总值</Label><Dots ml={2} /><Push /><Fit w={115} size={36}>107.3亿</Fit></Cell>
        <Cell><Label>流值</Label><Push /><Fit w={137} size={41}>101.2亿</Fit></Cell>
        <Cell><Label>市盈</Label><Sup>动</Sup><Dots ml={2} /><Push /><Fit w={93} size={29}>-472.31</Fit></Cell>
        <Cell><MoreButton>更多</MoreButton></Cell>
      </Quote>

      <Notice>
        <svg width="52" height="44" viewBox="29 654 52 44">
          <g fill="none" stroke={ORANGE} strokeWidth="3" strokeLinejoin="round">
            <path d="M52.500 656.500V695.500L41.500 687H34Q31 687 31 684V668Q31 665 34 665H41.500Z" />
            <path d="M60.500 665.500Q69 676 60.500 687" />
            <path d="M62 658.500C83 660 83 692 62 694" />
          </g>
        </svg>
        <NoticeText>自选分析：触发重点关注信号，立即点击查看</NoticeText>
        <Cross size={30} color="#999" />
      </Notice>

      <PeriodTabs>
        <Tab $w={87} $gap={13} $bar={0}>分时</Tab>
        <Tab $w={87} $ml={73} $gap={13} $bar={0}>五日</Tab>
        <Tab $w={70} $ml={84} $gap={13} $bar={3} $active>日K</Tab>
        <Tab $w={73} $ml={86} $gap={13} $bar={0}>周K</Tab>
        <Tab $w={73} $ml={88} $gap={13} $bar={0}>月K</Tab>
        <Tab $w={87} $ml={78} $gap={13} $bar={0}>更多</Tab>
        <CaretSlot><Caret w={15} h={12} color={GREY} /></CaretSlot>
        <GearSlot><Gear /></GearSlot>
      </PeriodTabs>

      <IndicatorRow $h={62}>
        <Chip $w={108} $pad={8}>
          <Fit w={70} size={35}>均线</Fit>
          <ChipCaret $ml={6}><Caret w={15} h={11} color={GREY} /></ChipCaret>
        </Chip>
        <Fit w={178} size={36} ml={10}>MA5:20.78</Fit>
        <Arrow ml={10} w={20} color={INK} />
        <Fit w={124} size={36} ml={11} color="#f0b73e">10:18.31</Fit>
        <Arrow ml={9} w={20} color="#f0b73e" />
        <Fit w={140} size={36} ml={11} color="#c8147f">20:16.49</Fit>
        <Arrow ml={10} w={20} color="#c8147f" />
        <Push />
        <Chip $w={126} $pad={12}>
          <Fit w={84} size={35}>DK点</Fit>
          <ChipCaret $ml={11} $mt={20}>
            <svg width="12" height="12" viewBox="0 0 12 12"><path d="M12 0V12H0z" fill={INK} /></svg>
          </ChipCaret>
        </Chip>
        <Chip $w={132} $ml={40} $pad={11}>
          <Fit w={108} size={36}>前复权</Fit>
        </Chip>
      </IndicatorRow>

      <PriceChart />

      <IndicatorRow $h={62}>
        <Chip $w={151} $pad={5}>
          <Fit w={108} size={36}>成交量</Fit>
          <ChipCaret $ml={13}><Caret w={15} h={12} color={GREY} /></ChipCaret>
        </Chip>
        <Fit w={87} size={38} ml={5}>70.65万</Fit>
        <Arrow ml={6} w={14} color={INK} down />
        <Fit w={137} size={38} ml={10} color="#ecc020">MA1:139.5万</Fit>
        <Arrow ml={6} w={14} color="#ecc020" down />
        <Fit w={136} size={38} ml={10} color="#d02ad0">MA2:117.2万</Fit>
        <Arrow ml={5} w={14} color="#d02ad0" down />
        <Fit w={148} size={38} ml={10} color="#0f930f">MA3:82.37万</Fit>
        <Arrow ml={4} w={14} color="#0f930f" />
        <Fit w={204} size={38} ml={11} color="#888">虚拟成交量:115.2万</Fit>
      </IndicatorRow>

      <VolumeChart />

      <Promo>
        <svg width="47" height="42" viewBox="47 1981 47 42">
          <path d="M93 1982V2021H90.500L74 2014.500V2018L67 2015.500L63 2011L57 2010V1994.500L90 1982z" fill="#e8560a" />
          <rect x="48" y="1994.500" width="4" height="14" fill="#e8560a" />
        </svg>
        <Fit w={668} size={38.500} ml={53} color={ORANGE}>刚买就跌怎么办？试试期货T+0交易&gt;&gt;</Fit>
        <PromoRule />
        <Cross size={33} color={ORANGE} />
      </Promo>

      <SectionTabs>
        {SECTIONS.map((s, i) => (
          <Tab key={s} $w={146.6} $active={i === 0} $gap={13} $bar={15}>{s}</Tab>
        ))}
      </SectionTabs>

      <CardStrip>
        <Card $split={58} />
        <Card $split={51} />
      </CardStrip>

      <BottomBar>
        <IndexBox>
          <Caret w={21} h={7} color="#777" up />
          <Fit w={167} size={45} color={RED}>3702.25</Fit>
          <IndexRow>
            <Label>上证</Label>
            <Push />
            <Fit w={113} size={42} color={RED}>0.51%</Fit>
          </IndexRow>
        </IndexBox>
        {NAV.map((n) => (
          <NavItem key={n.label}>
            {n.icon}
            <span>{n.label}</span>
          </NavItem>
        ))}
      </BottomBar>
      <HomeArea>
        <HomePill />
      </HomeArea>
    </Page>
  );
}
